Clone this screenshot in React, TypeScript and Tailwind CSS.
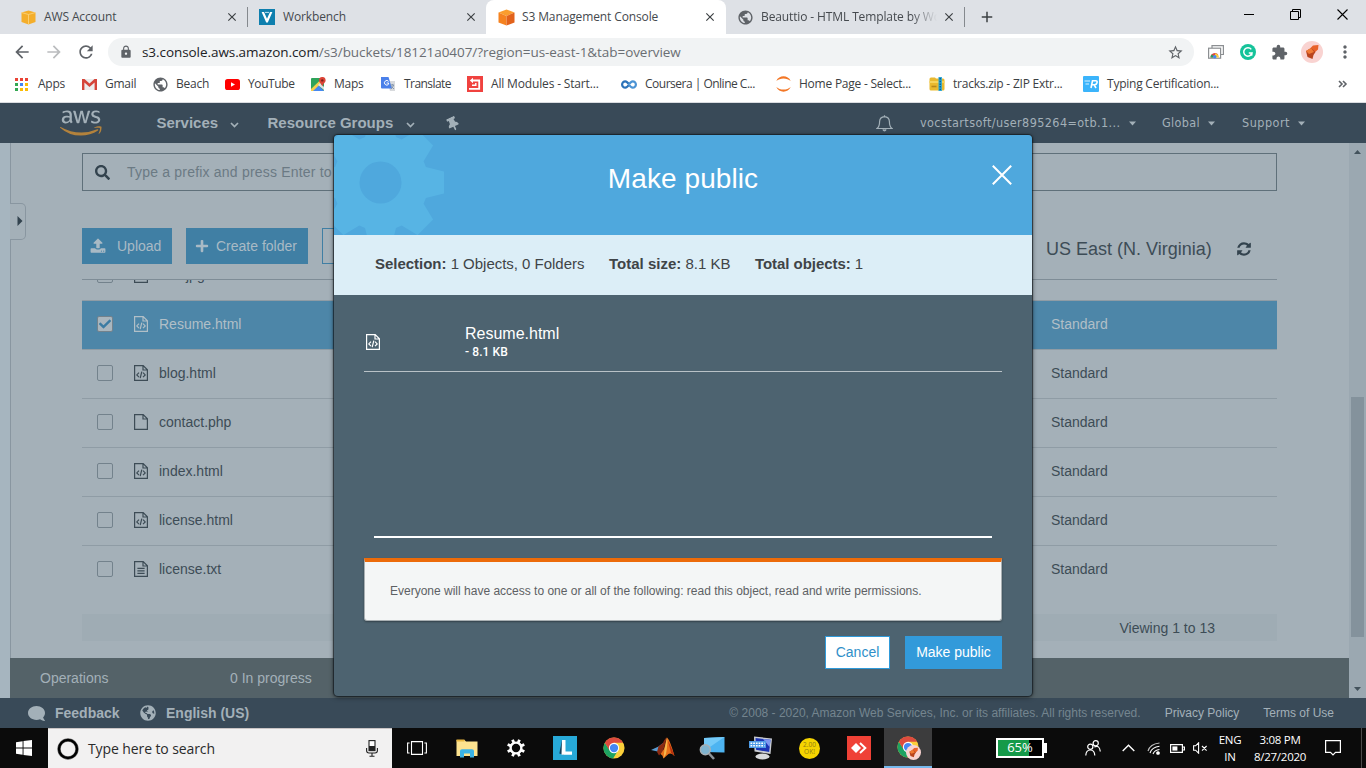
import type { ReactNode } from 'react';
import { FaAws, FaSearch, FaPlus, FaThumbtack, FaComment, FaGlobeAmericas, FaCheck } from 'react-icons/fa';
import { MdLock, MdStarBorder, MdArrowBack, MdArrowForward, MdRefresh, MdPublic, MdExtension, MdMoreVert, MdClose, MdAdd } from 'react-icons/md';

const SEGOE = "font-['Open_Sans','Noto_Sans',sans-serif]";
const ARIAL = "font-['Liberation_Sans',Arial,sans-serif]";

const UPLOAD =
  'M1344 1472q0-26-19-45t-45-19-45 19-19 45 19 45 45 19 45-19 19-45zm256 0q0-26-19-45t-45-19-45 19-19 45 19 45 45 19 45-19 19-45zm128-224v320q0 40-28 68t-68 28h-1472q-40 0-68-28t-28-68v-320q0-40 28-68t68-28h427q21 56 70.5 92t110.5 36h256q61 0 110.5-36t70.5-92h427q40 0 68 28t28 68zm-325-648q-17 40-59 40h-256v448q0 26-19 45t-45 19h-256q-26 0-45-19t-19-45v-448h-256q-42 0-59-40-17-39 14-69l448-448q18-19 45-19t45 19l448 448q31 30 14 69z';
const REFRESH =
  'M1639 1056q0 5-1 7-64 268-268 434.5t-478 166.5q-146 0-282.5-55t-243.5-157l-129 129q-19 19-45 19t-45-19-19-45v-448q0-26 19-45t45-19h448q26 0 45 19t19 45-19 45l-137 137q71 66 161 102t187 36q134 0 250-65t186-179q11-17 53-117 8-23 30-23h192q13 0 22.5 9.5t9.5 22.5zm25-800v448q0 26-19 45t-45 19h-448q-26 0-45-19t-19-45 19-45l138-138q-148-137-349-137-134 0-250 65t-186 179q-11 17-53 117-8 23-30 23h-199q-13 0-22.5-9.5t-9.5-22.5v-7q65-268 270-434.5t480-166.5q146 0 284 55.5t245 156.5l130-129q19-19 45-19t45 19 19 45z';

/* ---------- small drawings ---------- */

function ChromeLogo({ size }: { size: number }) {
  return (
    <svg width={size} height={size} viewBox="0 0 24 24">
      <circle cx="12" cy="12" r="11.5" fill="#fbcf3a" />
      <path d="M2 6.3 A11.5 11.5 0 0 0 11 23.4 L16.5 14.5 L12 12 L7.5 14.5 Z" fill="#1da362" />
      <path d="M2 6.3 A11.5 11.5 0 0 1 22 6.3 H12 L7 14.5 Z" fill="#dd4b3e" />
      <circle cx="12" cy="12" r="5.6" fill="#fff" />
      <circle cx="12" cy="12" r="4.5" fill="#4587f3" />
    </svg>
  );
}

function Avatar({ size }: { size: number }) {
  return (
    <svg width={size} height={size} viewBox="0 0 22 22">
      <circle cx="11" cy="11" r="11" fill="#f9d3d1" />
      <path d="M9.5 7 L12 4.5 L17.5 4 L17 8.5 L13 12 Z" fill="#e8622a" />
      <path d="M5 10 L10 7 L14.5 11 L12.5 14 L11.5 18 L6.5 16 Z" fill="#b9441d" />
      <path d="M5 10 L10 7 L13 11 L8 13 Z" fill="#f07a35" />
    </svg>
  );
}

function FileIcon({ kind }: { kind: 'code' | 'blank' | 'text' }) {
  return (
    <svg width="14" height="16" viewBox="0 0 14 16" fill="none" stroke="currentColor" strokeWidth="1.2">
      <path d="M0.6 0.6 H9.2 L13.4 4.8 V15.4 H0.6 Z M9 0.8 V5 H13.2" />
      {kind === 'code' && <path d="M5 7.6 L2.8 9.9 L5 12.2 M9 7.6 L11.2 9.9 L9 12.2 M7.8 6.6 L6.2 13.2" />}
      {kind === 'text' && <path d="M3.4 7.4 H10.6 M3.4 9.9 H10.6 M3.4 12.4 H10.6" />}
    </svg>
  );
}

function Gear() {
  const polar = (deg: number, r: number) => {
    const a = (deg * Math.PI) / 180;
    return `${(46.5 + r * Math.cos(a)).toFixed(1)} ${(47.5 + r * Math.sin(a)).toFixed(1)}`;
  };
  const points: string[] = [];
  for (let k = 0; k < 8; k++) {
    points.push(polar(k * 45 - 18.8, 48), polar(k * 45 - 9.8, 64.4), polar(k * 45 + 9.8, 64.4), polar(k * 45 + 18.8, 48));
  }
  return (
    <svg className="absolute left-0 top-0" width="120" height="100" viewBox="0 0 120 100">
      <path d={`M${points.join('L')}Z`} fill="#57b4e4" />
      <circle cx="46.5" cy="47.5" r="21" fill="#4fa8dd" />
    </svg>
  );
}

function Caret({ small }: { small?: boolean }) {
  return small ? (
    <svg className="shrink-0" width="7" height="5" viewBox="0 0 7 5"><path d="M0 0.5 H7 L3.5 4.5 Z" fill="#a3b0b8" /></svg>
  ) : (
    <svg className="mt-1 shrink-0" width="9" height="6" viewBox="0 0 9 6"><path d="M1 1 L4.5 4.5 L8 1" fill="none" stroke="#a3b0b8" strokeWidth="1.7" /></svg>
  );
}

/* ---------- browser chrome ---------- */

function Tab({ icon, title, className, fade }: { icon: ReactNode; title: string; className: string; fade?: boolean }) {
  return (
    <div className={`flex h-[34px] shrink-0 items-center text-[12px] tracking-[-0.12px] text-[#45494e] ${className}`}>
      <span className="flex w-4 shrink-0 justify-center">{icon}</span>
      <span className={`ml-2 w-[182px] shrink-0 whitespace-nowrap ${fade ? '[mask-image:linear-gradient(90deg,#000_150px,transparent_176px)]' : ''}`}>{title}</span>
      <MdClose className="ml-[-1px] size-[14px] shrink-0 text-[#3c4043]" />
    </div>
  );
}

function TabStrip() {
  return (
    <div className="flex h-[34px] items-center bg-[#dee1e6]">
      <Tab
        className="w-[239px] pl-5"
        title="AWS Account"
        icon={
          <svg width="15" height="15" viewBox="0 0 15 15">
            <path d="M7.5 0.5 L14.5 2.5 V12 L7.5 14.5 L0.5 12 V2.5 Z" fill="#f4ae2b" />
            <path d="M0.5 2.5 L7.5 4.5 L14.5 2.5 M7.5 4.5 V14.5" stroke="#fbd583" strokeWidth="0.8" fill="none" />
          </svg>
        }
      />
      <Separator className="ml-2" />
      <Tab
        className="w-[238px] pl-[11px]"
        title="Workbench"
        icon={
          <svg width="16" height="16" viewBox="0 0 16 16">
            <rect width="16" height="16" fill="#0e7fae" />
            <path d="M2.6 3 H5 L8 9.8 L11 3 H13.4 L8.8 13.5 H7.2 Z" fill="#fff" />
            <path d="M6 3.4 H10" stroke="#bfe3f2" strokeWidth="1" />
          </svg>
        }
      />
      <div className="flex h-[34px] w-[240px] shrink-0 rounded-t-lg bg-white">
        <Tab
          className="w-full pl-3"
          title="S3 Management Console"
          icon={
            <svg className="shrink-0" width="17" height="17" viewBox="0 0 17 17">
              <path d="M8.5 0.5 L16.5 3.5 L8.5 7 L0.5 3.5 Z" fill="#fa9d2e" />
              <path d="M0.5 3.5 L8.5 7 V16.5 L0.5 13.5 Z" fill="#f58220" />
              <path d="M16.5 3.5 L8.5 7 V16.5 L16.5 13.5 Z" fill="#e2621b" />
            </svg>
          }
        />
      </div>
      <Tab className="w-[238px] pl-[11px]" fade title="Beauttio - HTML Template by Wo" icon={<MdPublic className="size-[17px] shrink-0 text-[#5f6368]" />} />
      <Separator className="" />
      <MdAdd className="ml-[13px] size-[18px] text-[#3c4043]" />
      <div className="ml-auto flex items-center gap-9 pb-[5px] pr-[18px]">
        <svg width="10" height="11" viewBox="0 0 10 11"><path d="M0 5.5 H10" stroke="#000" /></svg>
        <svg width="11" height="11" viewBox="0 0 11 11" fill="none" stroke="#000"><path d="M0.5 2.5 H8.5 V10.5 H0.5 Z M2.5 2.5 V0.5 H10.5 V8.5 H8.5" /></svg>
        <svg width="11" height="11" viewBox="0 0 11 11"><path d="M0.5 0.5 L10.5 10.5 M10.5 0.5 L0.5 10.5" stroke="#000" strokeWidth="1.1" /></svg>
      </div>
    </div>
  );
}

function Separator({ className }: { className: string }) {
  return <div className={`h-5 w-px shrink-0 bg-[#85898e] ${className}`} />;
}

function AddressBar() {
  return (
    <div className="flex h-9 items-center bg-white">
      <MdArrowBack className="ml-3 size-5 text-[#5f6368]" />
      <MdArrowForward className="ml-3 size-5 text-[#babcbe]" />
      <MdRefresh className="ml-3 size-5 text-[#5f6368]" />
      <div className="ml-3 flex h-7 w-[1086px] items-center rounded-full bg-[#f1f3f4] pl-[11px] pr-2.5">
        <MdLock className="size-[14px] text-[#5f6368]" />
        <span className="ml-[9px] whitespace-nowrap text-[13.5px] tracking-[-0.065px] text-[#6a6e73]">
          <span className="text-[#202124]">s3.console.aws.amazon.com</span>/s3/buckets/18121a0407/?region=us-east-1&amp;tab=overview
        </span>
        <MdStarBorder className="ml-auto size-[17px] text-[#5f6368]" />
      </div>
      <svg className="ml-[14px]" width="16" height="14" viewBox="0 0 16 14">
        <path d="M4 3 V0.6 H15.4 V9.5 H13" fill="none" stroke="#8c8f92" strokeWidth="1.2" />
        <rect x="0.6" y="3.2" width="12" height="10" fill="#fff" stroke="#8c8f92" strokeWidth="1.2" />
        <path d="M2.5 12.6 A4.3 4.3 0 0 1 10.5 10.2 H6.6 L5 12.6 Z" fill="#dd4b3e" />
        <path d="M7 8.5 A4.3 4.3 0 0 1 11 12.6 H7 Z" fill="#fbcf3a" />
        <path d="M2.5 12.6 A4 4 0 0 1 4 9.3 L6 12.6 Z" fill="#1da362" />
        <circle cx="6.8" cy="11.8" r="1.7" fill="#4587f3" />
      </svg>
      <svg className="ml-4" width="16" height="16" viewBox="0 0 16 16">
        <circle cx="8" cy="8" r="8" fill="#15c39a" />
        <path d="M11.3 5.4 A4.2 4.2 0 1 0 12 9 H8.8 M12 9 L11.6 11.6" fill="none" stroke="#fff" strokeWidth="1.5" />
      </svg>
      <MdExtension className="ml-[15px] size-[17px] text-[#5f6368]" />
      <span className="ml-[13px]"><Avatar size={22} /></span>
      <MdMoreVert className="ml-3 size-5 text-[#5f6368]" />
    </div>
  );
}

function Bookmark({ icon, label, className }: { icon: ReactNode; label: string; className: string }) {
  return (
    <div className={`flex shrink-0 items-center ${className}`}>
      <span className="mr-2 flex w-4 shrink-0 justify-center">{icon}</span>
      <span className="whitespace-nowrap">{label}</span>
    </div>
  );
}

function BookmarkBar() {
  const dots = ['#ea4335', '#ea4335', '#ea4335', '#34a853', '#4285f4', '#fbbc05', '#34a853', '#fbbc05', '#fbbc05'];
  return (
    <div className="flex h-[33px] items-center border-b border-[#dadce0] bg-white pb-1 pl-[14px] text-[12px] tracking-[-0.23px] text-[#3c4043]">
      <Bookmark
        className="w-[67px]"
        label="Apps"
        icon={
          <svg className="mr-0.5" width="13" height="13" viewBox="0 0 13 13">
            {dots.map((c, i) => <rect key={i} x={(i % 3) * 5} y={Math.floor(i / 3) * 5} width="3" height="3" fill={c} />)}
          </svg>
        }
      />
      <Bookmark
        className="w-[71px]"
        label="Gmail"
        icon={
          <svg className="shrink-0" width="15" height="11" viewBox="0 0 15 11">
            <rect width="15" height="11" fill="#eceded" />
            <path d="M0 0 H2.5 L7.5 4.5 L12.5 0 H15 V11 H12.6 V3.4 L7.5 8 L2.4 3.4 V11 H0 Z" fill="#d5453a" />
          </svg>
        }
      />
      <Bookmark className="w-[72px]" label="Beach" icon={<MdPublic className="size-[17px] shrink-0 text-[#5f6368]" />} />
      <Bookmark
        className="w-[86px] tracking-[-0.4px]"
        label="YouTube"
        icon={<svg width="15" height="11" viewBox="0 0 15 11"><rect width="15" height="11" rx="2.6" fill="#f00" /><path d="M6 3.2 L10 5.5 L6 7.8 Z" fill="#fff" /></svg>}
      />
      <Bookmark
        className="w-[70px]"
        label="Maps"
        icon={
          <svg width="15" height="15" viewBox="0 0 15 15">
            <rect y="1" width="13" height="13" rx="1" fill="#2fa35a" />
            <path d="M1 14 L7 8 L13 14 Z" fill="#4688f1" />
            <path d="M0 12 L11 1.5 L13 3.5 L2 14 H0 Z" fill="#f6d04b" />
            <path d="M7 8 L9 6 L13 10 V13 Z" fill="#dfe3e6" />
            <path d="M11 0 A3.4 3.4 0 0 1 14.6 3.4 C14.6 5.5 12 6.4 11.3 9.5 C10.6 6.4 8 5.5 8 3.4 A3.4 3.4 0 0 1 11 0 Z" fill="#dc4437" />
            <circle cx="11.3" cy="3.4" r="1.2" fill="#7b231c" />
          </svg>
        }
      />
      <Bookmark
        className="w-[87px] tracking-[-0.55px]"
        label="Translate"
        icon={
          <svg width="15" height="15" viewBox="0 0 15 15">
            <path d="M6 4 H14 V14 H9 Z" fill="#d8dadd" />
            <path d="M0 0 H7.5 L11 11.5 H1 A1 1 0 0 1 0 10.5 Z" fill="#4a80ea" />
            <path d="M7.6 4.4 A2.3 2.3 0 1 0 7.6 7.2 V6 H5.6" fill="none" stroke="#fff" strokeWidth="1" />
            <path d="M9.5 8 H13 M11.3 7 V8 M12.6 8 Q12 10.5 9.8 12 M10.4 9.5 L13 12" fill="none" stroke="#7b8fa8" strokeWidth="0.9" />
          </svg>
        }
      />
      <Bookmark
        className="w-[154px] tracking-[-0.16px]"
        label="All Modules - Start..."
        icon={
          <svg width="16" height="16" viewBox="0 0 16 16">
            <rect width="16" height="16" fill="#f0423f" />
            <path d="M2 12.8 H12.2 V4.5 H5" fill="none" stroke="#fff" strokeWidth="1.8" />
            <path d="M6 1.8 V7.2 L2.8 4.5 Z" fill="#fff" />
            <path d="M5 9.2 H8.8 V7" fill="none" stroke="#fff" strokeWidth="1.4" />
          </svg>
        }
      />
      <Bookmark
        className="w-[154px] tracking-[-0.5px]"
        label="Coursera | Online C..."
        icon={
          <svg width="16" height="9" viewBox="0 0 16 9" fill="none" strokeWidth="2.2">
            <path d="M8 4.5 C6.5 2 5.5 1.3 4.3 1.3 A3.2 3.2 0 0 0 4.3 7.7 C5.5 7.7 6.5 7 8 4.5" stroke="#2c72b8" />
            <path d="M8 4.5 C9.5 2 10.5 1.3 11.7 1.3 A3.2 3.2 0 0 1 11.7 7.7 C10.5 7.7 9.5 7 8 4.5" stroke="#4b93d4" />
          </svg>
        }
      />
      <Bookmark
        className="w-[154px]"
        label="Home Page - Select..."
        icon={
          <svg width="15" height="16" viewBox="0 0 15 16">
            <path d="M0.3 5 C3 -1.2 12 -1.2 14.7 5 C11 1.6 4 1.6 0.3 5 Z M0.3 11 C3 17.2 12 17.2 14.7 11 C11 14.4 4 14.4 0.3 11 Z" fill="#f37726" />
          </svg>
        }
      />
      <Bookmark
        className="w-[154px]"
        label="tracks.zip - ZIP Extr..."
        icon={
          <svg width="16" height="14" viewBox="0 0 16 14">
            <path d="M0.5 2 Q0.5 0.5 2 0.5 H6 L7 1.5 H14 Q15.5 1.5 15.5 3 V12 Q15.5 13.5 14 13.5 H2 Q0.5 13.5 0.5 12 Z" fill="#e9b92f" />
            <path d="M0.5 4 H15.5 V6 H0.5 Z" fill="#f5d35c" />
            <rect x="9.5" width="3.4" height="14" fill="#2aa7d6" />
            <path d="M11.2 1 V13" stroke="#0b5c8e" strokeWidth="1.4" strokeDasharray="1.5 1.2" />
            <path d="M2.5 9.5 H7.5" stroke="#b9861a" strokeWidth="1.6" />
          </svg>
        }
      />
      <Bookmark
        className="w-[160px]"
        label="Typing Certification..."
        icon={
          <svg width="16" height="16" viewBox="0 0 16 16">
            <rect width="16" height="16" rx="1" fill="#3bb4fb" />
            <path d="M1.5 5 H7 M2.5 8 H6" stroke="#d9f1ff" strokeWidth="1.2" />
            <path d="M8 12 L9.5 4.8 H12.6 Q14.6 4.8 14 6.8 Q13.5 8.8 11.5 8.8 H9 M11.2 8.8 L13 12" fill="none" stroke="#fff" strokeWidth="1.6" />
          </svg>
        }
      />
      <svg className="ml-auto mr-[18px]" width="10" height="8" viewBox="0 0 10 8"><path d="M1 1 L4 4 L1 7 M5 1 L8 4 L5 7" fill="none" stroke="#5f6368" strokeWidth="1.6" /></svg>
    </div>
  );
}

/* ---------- console page ---------- */

function ConsoleNav() {
  return (
    <div className={`flex h-10 items-center bg-[#394a58] text-[#a3b0b8] ${ARIAL}`}>
      <div className="relative ml-[59.5px] h-[34px] w-[42px]">
        <FaAws className="absolute left-0 top-0 h-[34px] w-[42px] text-[#a3b0b8] [clip-path:inset(0_0_14px_0)]" />
        <FaAws className="absolute left-0 top-0 h-[34px] w-[42px] text-[#b3823c] [clip-path:inset(20px_0_0_0)]" />
      </div>
      <span className="ml-[55px] w-[73.5px] text-[15px] font-bold tracking-[-0.02px]">Services</span>
      <Caret />
      <span className="ml-[28.5px] w-[138px] whitespace-nowrap text-[15px] font-bold tracking-[-0.01px]">Resource Groups</span>
      <Caret />
      <FaThumbtack className="ml-[31px] mt-0.5 size-[14px] -rotate-[25deg]" />
      <svg className="ml-auto mt-px" width="17" height="17" viewBox="0 0 17 17" fill="none" stroke="#a3b0b8" strokeWidth="1.2">
        <path d="M1 13.5 Q3.6 11.5 3.6 6.5 Q3.8 2 8.5 1.6 Q13.2 2 13.4 6.5 Q13.4 11.5 16 13.5 Z M8.5 1.6 V0.2" />
        <path d="M6.8 14.5 Q8.5 17.5 10.2 14.5" fill="#a3b0b8" />
      </svg>
      <div className="ml-[27px] flex items-center pt-px font-['DejaVu_Sans_Condensed','DejaVu_Sans',sans-serif] text-[12.5px]">
        <span className="w-[209px] whitespace-nowrap tracking-[0.41px]">vocstartsoft/user895264=otb.1...</span>
        <Caret small />
        <span className="ml-[26px] w-[46px] tracking-[0.35px]">Global</span>
        <Caret small />
        <span className="ml-[27px] w-[56px] tracking-[0.5px]">Support</span>
        <Caret small />
      </div>
      <div className="w-[61px]" />
    </div>
  );
}

function FileRow({ name, kind, selected, last }: { name: string; kind: 'code' | 'blank' | 'text'; selected?: boolean; last?: boolean }) {
  return (
    <div
      className={`flex h-[49px] shrink-0 items-center border-b pb-[2px] pl-[15px] ${last ? 'border-transparent' : 'border-[#8f9ca5]'} ${
        selected ? 'bg-[#4d86a8] text-[#b1bfc7]' : 'text-[#3d4c56]'
      }`}
    >
      <span className={`flex size-4 items-center justify-center rounded-[2px] border border-[#73828c] ${selected ? 'bg-[#a9b6be]' : ''}`}>
        {selected && <FaCheck className="size-3 text-[#3b7ca3]" />}
      </span>
      <span className="ml-[21px]"><FileIcon kind={kind} /></span>
      <span className="ml-[11px] w-[892px]">{name}</span>
      <span>Standard</span>
    </div>
  );
}

function Main() {
  return (
    <div className={`flex h-[555px] bg-[#a4b0b8] text-[14px] text-[#3d4c56] ${ARIAL}`}>
      <div className="w-[10px] bg-[#a6b5bf]" />
      <div className="flex w-[1339px] flex-col">
        <div className="flex h-[515px]">
          <div className="flex w-4 flex-col">
            <div className="h-[60px] w-px bg-[#8996a0]" />
            <div className="flex h-[37px] items-center justify-end rounded-r-[5px] border border-l-0 border-[#8996a0] pb-px pr-[2px]">
              <svg width="6" height="10" viewBox="0 0 6 10"><path d="M0.5 0 L5.5 5 L0.5 10 Z" fill="#33434e" /></svg>
            </div>
            <div className="w-px flex-1 bg-[#8996a0]" />
          </div>
          <div className="ml-14 flex w-[1195px] flex-col pt-[10px]">
            <div className="flex h-[38px] items-center border border-[#5f707a] pl-3 text-[#6b7a84]">
              <FaSearch className="size-[15px] text-[#33434e]" />
              <span className="ml-[17px] tracking-[0.2px]">Type a prefix and press Enter to search. Press ESC to clear.</span>
            </div>
            <div className="mt-[37px] flex h-9 text-[#a9bac5]">
              <div className="flex w-[90px] items-center bg-[#407fa4] pl-2">
                <svg width="16" height="16" viewBox="0 0 1792 1792" fill="currentColor"><path d={UPLOAD} /></svg>
                <span className="ml-[11px]">Upload</span>
              </div>
              <div className="ml-[14px] flex w-[122px] items-center bg-[#407fa4] pl-[9px]">
                <FaPlus className="size-[14px]" />
                <span className="ml-[7px] whitespace-nowrap">Create folder</span>
              </div>
              <div className="ml-[14px] w-[90px] border border-[#407fa4]" />
              <div className="ml-auto flex w-[231px] items-center pt-1.5 text-[18px] text-[#3d4c56]">
                <span className="w-[190px] whitespace-nowrap">US East (N. Virginia)</span>
                <svg width="16" height="16" viewBox="0 0 1792 1792" fill="#33434e"><path d={REFRESH} /></svg>
              </div>
            </div>
            <div className="mt-[15px] flex h-[22px] shrink-0 items-end overflow-hidden border-y border-b-[#8f9ca5] border-t-[#7e8c96] pb-[17px] pl-[15px]">
              <span className="size-4 shrink-0 rounded-[2px] border border-[#73828c]" />
              <span className="ml-[21px] shrink-0"><FileIcon kind="text" /></span>
              <span className="ml-[38px] leading-4">jpg</span>
            </div>
            <FileRow name="Resume.html" kind="code" selected />
            <FileRow name="blog.html" kind="code" />
            <FileRow name="contact.php" kind="blank" />
            <FileRow name="index.html" kind="code" />
            <FileRow name="license.html" kind="code" />
            <FileRow name="license.txt" kind="text" last />
            <div className="mt-[19px] flex h-[27px] items-center justify-end bg-[#9facb4] pr-[62px] pt-0.5">Viewing 1 to 13</div>
          </div>
        </div>
        <div className="flex h-10 items-center bg-[#546268] pl-[30px] text-[#a3b0b8]">
          <span className="w-[190px]">Operations</span>
          <span>0 In progress</span>
        </div>
      </div>
      <div className="flex w-[17px] flex-col items-center bg-[#9ba8b1]">
        <svg className="mt-[7px]" width="7" height="4" viewBox="0 0 7 4"><path d="M0 4 L3.5 0 L7 4 Z" fill="#43525c" /></svg>
        <div className="mt-[243px] h-[240px] w-[13px] bg-[#84929c]" />
        <svg className="mb-[7px] mt-auto" width="7" height="4" viewBox="0 0 7 4"><path d="M0 0 L3.5 4 L7 0 Z" fill="#43525c" /></svg>
      </div>
    </div>
  );
}

function Footer() {
  return (
    <div className={`flex h-[30px] items-center bg-[#394a58] text-[#a3b0b8] ${ARIAL}`}>
      <FaComment className="ml-7 size-[17px] -scale-x-100" />
      <span className="ml-[10px] w-[85px] text-[14px] font-bold">Feedback</span>
      <FaGlobeAmericas className="size-4" />
      <span className="ml-[10px] text-[14px] font-bold">English (US)</span>
      <span className="ml-auto whitespace-nowrap text-[12px] text-[#74858f]">© 2008 - 2020, Amazon Web Services, Inc. or its affiliates. All rights reserved.</span>
      <span className="ml-[24px] text-[12px]">Privacy Policy</span>
      <span className="ml-[24px] mr-8 text-[12px]">Terms of Use</span>
    </div>
  );
}

function MakePublicDialog() {
  return (
    <div className={`absolute left-[334px] top-[135px] flex h-[561px] w-[698px] flex-col overflow-hidden rounded-[4px] bg-[#4d6370] shadow-[0_0_1px_1px_rgba(20,28,34,0.75),0_1px_5px_rgba(0,0,0,0.6)] ${ARIAL}`}>
      <div className="relative flex h-[100px] items-center justify-center overflow-hidden bg-[#4fa8dd] pb-3">
        <Gear />
        <span className="text-[28px] leading-9 tracking-[0.08px] text-white">Make public</span>
        <svg className="absolute right-[20px] top-[30px]" width="20" height="20" viewBox="0 0 20 20"><path d="M0.8 0.8 L19.2 19.2 M19.2 0.8 L0.8 19.2" stroke="#fff" strokeWidth="2" /></svg>
      </div>
      <div className="flex h-[60px] items-center bg-[#dceef7] pb-0.5 pl-[41px] text-[15px] text-[#3f4447]">
        <span className="w-[234px] tracking-[-0.02px]"><b>Selection:</b> 1 Objects, 0 Folders</span>
        <span className="w-[146px]"><b>Total size:</b> 8.1 KB</span>
        <span className="tracking-[-0.05px]"><b>Total objects:</b> 1</span>
      </div>
      <div className="flex flex-1 flex-col px-[30px] text-white">
        <div className="flex h-[77px] shrink-0 border-b border-[#b9c2c7] pl-[2px] pt-[29px]">
          <span className="mt-[10px] w-[99px]"><FileIcon kind="code" /></span>
          <span className="flex flex-col">
            <span className="text-[16px] leading-[19px]">Resume.html</span>
            <span className="font-['Roboto',sans-serif] text-[12px] font-medium leading-[18px] tracking-[0.1px]">- 8.1 KB</span>
          </span>
        </div>
        <div className="mx-[10px] mt-[164px] h-[2px] bg-white" />
        <div className="mt-[20px] flex h-[63px] items-center rounded-b-[3px] border border-t-4 border-[#a9b0b3] border-t-[#ec6b0a] bg-[#f4f6f6] pb-0 pl-[25px] text-[12px] text-[#5d6164] shadow-[0_1px_2px_rgba(0,0,0,0.35)]">
          Everyone will have access to one or all of the following: read this object, read and write permissions.
        </div>
        <div className="mt-[15px] flex justify-end gap-[15px] text-[14px]">
          <button className="h-[33px] w-[65px] border border-[#2f9ad9] bg-white text-[#2f8fc9]">Cancel</button>
          <button className="h-[33px] w-[97px] bg-[#329ada] text-white">Make public</button>
        </div>
      </div>
    </div>
  );
}

/* ---------- taskbar ---------- */

function Cell({ children }: { children: ReactNode }) {
  return <div className="flex h-10 w-[49px] shrink-0 items-center justify-center">{children}</div>;
}

function Taskbar() {
  return (
    <div className="flex h-10 items-center bg-[#0b0b0b] text-white">
      <div className="flex w-12 shrink-0 justify-center">
        <svg width="16" height="16" viewBox="0 0 16 16" fill="#fff"><path d="M0 2.3 L6.6 1.3 V7.5 H0 Z M7.5 1.1 L16 0 V7.5 H7.5 Z M0 8.5 H6.6 V14.7 L0 13.7 Z M7.5 8.5 H16 V16 L7.5 14.9 Z" /></svg>
      </div>
      <div className="flex h-10 w-[344px] shrink-0 items-center border-t border-[#c9c4c4] bg-[#f2f1f1] pl-[9px]">
        <svg width="22" height="22" viewBox="0 0 22 22"><circle cx="11" cy="11" r="9" fill="none" stroke="#777" strokeWidth="3.4" /><circle cx="11" cy="11" r="9" fill="none" stroke="#000" strokeWidth="2.4" /></svg>
        <span className="ml-[9px] text-[14px] tracking-[-0.1px] text-[#2b2b2b]">Type here to search</span>
        <svg className="ml-auto mr-[14px]" width="12" height="17" viewBox="0 0 12 17">
          <rect x="3" y="0.6" width="6" height="10" fill="#fff" stroke="#222" strokeWidth="1.1" />
          <path d="M3 6 H9 V10.5 H3 Z" fill="#222" />
          <path d="M0.6 8 V10.5 Q0.6 13 3 13 H9 Q11.4 13 11.4 10.5 V8 M6 13 V16 M3.5 16.3 H8.5" fill="none" stroke="#222" strokeWidth="1.1" />
        </svg>
      </div>
      <Cell>
        <svg width="20" height="14" viewBox="0 0 20 14" fill="none" stroke="#fff" strokeWidth="1.1"><path d="M4.5 0.6 H15.5 V13.4 H4.5 Z M2.6 2 H0.6 V12 H2.6 M17.4 2 H19.4 V12 H17.4" /></svg>
      </Cell>
      <Cell>
        <svg className="ml-0.5" width="22" height="19" viewBox="0 0 22 19">
          <path d="M0.5 1 H8.5 L10 2.5 H21.5 V17 H0.5 Z" fill="#fde38f" />
          <path d="M0.5 0.5 H8.5 V2.5 H0.5 Z" fill="#e9b740" />
          <path d="M4 18.5 V12 Q4 10.3 6 10.3 H16 Q18 10.3 18 12 V18.5 H14 V14.5 H8 V18.5 Z" fill="#3bb3e6" />
        </svg>
      </Cell>
      <Cell>
        <svg className="ml-0.5" width="20" height="20" viewBox="0 0 20 20" fill="none" stroke="#fff">
          <circle cx="10" cy="10" r="5.4" strokeWidth="2.4" />
          {[0, 45, 90, 135, 180, 225, 270, 315].map((a) => <path key={a} d="M10 1 V4.5" strokeWidth="2.8" transform={`rotate(${a + 22.5} 10 10)`} />)}
        </svg>
      </Cell>
      <Cell>
        <svg className="ml-[3px]" width="24" height="24" viewBox="0 0 24 24">
          <rect width="24" height="24" fill="#27a9d8" />
          <path d="M9 4 L6.3 17.5 L11 19 Z" fill="#13405c" />
          <path d="M9 4 H12.5 V15.5 H19 V18.8 H8.5 Z" fill="#fff" />
        </svg>
      </Cell>
      <Cell><span className="ml-0.5"><ChromeLogo size={22} /></span></Cell>
      <Cell>
        <svg className="ml-0.5" width="24" height="22" viewBox="0 0 24 22">
          <path d="M0 13 L7.5 9.5 L12 6 L9 16 L6.5 14.5 Z" fill="#5a9bd0" />
          <path d="M7.5 9.5 L12 6 Q14 1 16 0.5 L12 14 L8 18.5 L6 15 Z" fill="#8a2a12" />
          <path d="M16 0.5 Q19 3 23.5 19 Q20 15.5 17.5 17 L12.5 21.5 Q12 18 9.5 17 L13 12 Z" fill="#e8701b" />
          <path d="M16 0.5 Q17 6 15 17 L12.5 21.5 Q13 12 16 0.5 Z" fill="#f8b64b" />
          <path d="M17 4 Q20 9 23.5 19 L20 15.8 Z" fill="#b8300f" />
        </svg>
      </Cell>
      <Cell>
        <svg className="ml-0.5" width="26" height="24" viewBox="0 0 26 24">
          <path d="M5 2 L25.5 1 V16.5 L5 16 Z" fill="#4db4f1" />
          <path d="M5 2 L25.5 1 L5 15 Z" fill="#74caf8" />
          <path d="M10 17.5 L15 23" stroke="#8c9399" strokeWidth="2.6" />
          <circle cx="6.3" cy="13.8" r="5" fill="#7fb4cf" stroke="#a8b0b5" strokeWidth="1.4" />
        </svg>
      </Cell>
      <Cell>
        <svg className="ml-0.5" width="24" height="24" viewBox="0 0 24 24">
          <path d="M5 0.5 L23 2.5 L21.5 18 L5.5 15.5 Z" fill="#c9ccd2" />
          <path d="M6.5 2 L21.5 3.7 L20.2 16 L7 13.8 Z" fill="#1c35b5" />
          <path d="M14 3 L21.5 3.7 L20.6 11 Z" fill="#7f97ef" />
          <ellipse cx="13.5" cy="20.5" rx="7" ry="3" fill="#d7d9dc" />
          <rect y="5" width="17" height="7" fill="#4e9be6" />
          <path d="M1.5 7.2 H15.5 M1.5 9.8 H15.5" stroke="#fff" strokeWidth="1.5" strokeDasharray="1.7 1" />
        </svg>
      </Cell>
      <Cell>
        <span className="ml-0.5 flex size-[21px] flex-col items-center justify-center rounded-full bg-[#f5d400] text-[6.5px] leading-[7px] text-[#8f7c14]">
          <span>2.00</span><span>OK!</span>
        </span>
      </Cell>
      <Cell>
        <svg className="ml-[3px]" width="24" height="24" viewBox="0 0 24 24">
          <rect width="24" height="24" fill="#ef4136" />
          <path d="M4 12 L9 7 L14 12 L9 17 Z" fill="#fff" />
          <path d="M13 7 L18.3 12 L13 17" fill="none" stroke="#fff" strokeWidth="2" />
        </svg>
      </Cell>
      <div className="ml-[2px] flex h-10 w-12 shrink-0 items-center justify-center border-b-2 border-[#76b9ed] bg-[#3c3c3d]">
        <div className="relative size-[22px]">
          <ChromeLogo size={22} />
          <span className="absolute left-[9px] top-[9px]"><Avatar size={15} /></span>
        </div>
      </div>
      <div className="ml-16 flex w-[51px] shrink-0 items-center">
        <div className="flex h-5 w-12 items-center justify-center border-2 border-white bg-[linear-gradient(90deg,#159a49_0_70%,#000_70%)] text-[13px]">65%</div>
        <div className="h-[10px] w-[3px] shrink-0 bg-white" />
      </div>
      <svg className="ml-[38px] shrink-0" width="16" height="16" viewBox="0 0 16 16" fill="none" stroke="#fff" strokeWidth="1.2">
        <circle cx="5.3" cy="6.8" r="2.6" /><path d="M0.8 15.5 Q1 10 5.3 10 Q9.6 10 9.8 15.5" />
        <circle cx="10.7" cy="3.2" r="2.6" /><path d="M9.3 7 Q14.5 4.5 15.3 11.5" />
      </svg>
      <svg className="ml-[21px] shrink-0" width="13" height="8" viewBox="0 0 13 8"><path d="M0.7 7 L6.5 1.2 L12.3 7" fill="none" stroke="#fff" strokeWidth="1.4" /></svg>
      <svg className="ml-[12px] shrink-0" width="14" height="13" viewBox="0 0 14 13" fill="none" stroke="#fff" strokeWidth="1.1">
        <path d="M1 9 Q3 2 12.5 1" opacity="0.75" /><path d="M3 11 Q5 5 12.5 4.3" /><path d="M6 12 Q7.5 8 12.5 7.5" /><circle cx="11" cy="11" r="1.3" fill="#fff" />
      </svg>
      <svg className="ml-[9px] shrink-0" width="15" height="9" viewBox="0 0 15 9"><path d="M0.6 0.6 H12.4 V8.4 H0.6 Z M13 3 H14.4 V6 H13" fill="none" stroke="#fff" strokeWidth="1.2" /><rect x="2.4" y="2.4" width="5" height="4.2" fill="#fff" /></svg>
      <svg className="ml-[8px] shrink-0" width="15" height="12" viewBox="0 0 15 12" fill="none" stroke="#fff" strokeWidth="1.1"><path d="M0.6 3.8 H2.6 L5.6 0.8 V11.2 L2.6 8.2 H0.6 Z M9 4 L13.6 8.6 M13.6 4 L9 8.6" /></svg>
      <div className="ml-[6px] flex w-[32px] shrink-0 flex-col items-center text-[11.5px] leading-[17px] tracking-[-0.3px]"><span>ENG</span><span>IN</span></div>
      <div className="ml-[7px] flex w-[54px] shrink-0 flex-col items-center whitespace-nowrap text-[11.5px] leading-[17px] tracking-[-0.25px]"><span>3:08 PM</span><span>8/27/2020</span></div>
      <svg className="ml-[18px] shrink-0" width="16" height="16" viewBox="0 0 16 16"><path d="M0.6 0.6 H15.4 V12.4 H10.5 L8 15 L5.5 12.4 H0.6 Z" fill="none" stroke="#fff" strokeWidth="1.2" /></svg>
      <div className="ml-auto mr-1 h-10 w-px shrink-0 bg-[#4a4a4a]" />
    </div>
  );
}

export default function App() {
  return (
    <div className={`relative h-[768px] w-[1366px] overflow-hidden bg-white ${SEGOE}`}>
      <TabStrip />
      <AddressBar />
      <BookmarkBar />
      <ConsoleNav />
      <Main />
      <Footer />
      <Taskbar />
      <MakePublicDialog />
    </div>
  );
}
